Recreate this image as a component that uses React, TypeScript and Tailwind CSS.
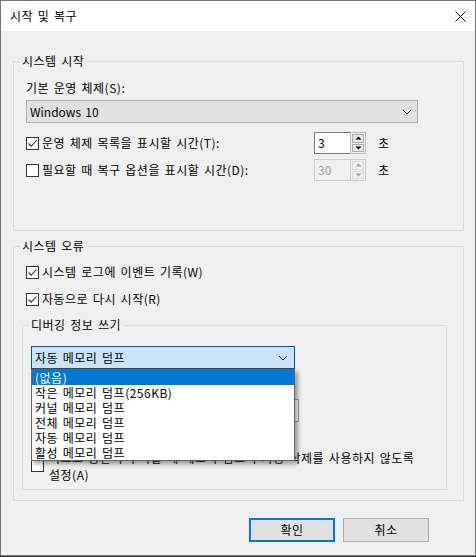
import type { ReactNode } from 'react';

const font = { fontFamily: '"Noto Sans CJK KR", "Noto Sans", sans-serif' };

function CheckBox({ checked }: { checked?: boolean }) {
  return (
    <span className="flex h-[13px] w-[13px] flex-shrink-0 items-center justify-center border border-[#333333] bg-white">
      {checked && (
        <svg width="11" height="11" viewBox="0 0 11 11">
          <path d="M1.5 5.5 L4.2 8.2 L9.5 2.5" fill="none" stroke="#333333" strokeWidth="1.1" />
        </svg>
      )}
    </span>
  );
}

function Chevron() {
  return (
    <svg width="10" height="6" viewBox="0 0 10 6">
      <path d="M1 1 L5 5 L9 1" fill="none" stroke="#333333" strokeWidth="1" />
    </svg>
  );
}

function Group({ title, className, children }: { title: string; className: string; children: ReactNode }) {
  return (
    <div className={`relative border border-[#dcdcdc] ${className}`}>
      <span className="absolute -top-[9px] left-[6px] bg-[#f0f0f0] px-[2px] text-[12px] leading-[16px] text-black">
        {title}
      </span>
      {children}
    </div>
  );
}

function Spinner({ value, disabled }: { value: string; disabled?: boolean }) {
  const arrow = disabled ? '#a0a0a0' : '#000000';
  return (
    <div className="flex h-[22px] w-[52px]">
      <div
        className={`w-[36px] border border-r-0 pl-[3px] text-[12px] leading-[20px] tracking-normal ${
          disabled ? 'border-[#cccccc] bg-[#f0f0f0] text-[#a0a0a0]' : 'border-[#7a7a7a] bg-white text-black'
        }`}
      >
        {value}
      </div>
      <div
        className={`flex w-[16px] flex-col gap-px border p-px ${
          disabled ? 'border-[#cccccc] bg-[#f0f0f0]' : 'border-[#bcbcbc] bg-[#f0f0f0]'
        }`}
      >
        <span
          className={`flex flex-1 items-center justify-center border ${
            disabled ? 'border-[#dcdcdc] bg-[#f0f0f0]' : 'border-[#adadad] bg-[#e5e5e5]'
          }`}
        >
          <svg width="7" height="4" viewBox="0 0 7 4">
            <path d="M0.5 3.5 L3.5 0.5 L6.5 3.5 Z" fill={arrow} />
          </svg>
        </span>
        <span
          className={`flex flex-1 items-center justify-center border ${
            disabled ? 'border-[#dcdcdc] bg-[#f0f0f0]' : 'border-[#adadad] bg-[#e5e5e5]'
          }`}
        >
          <svg width="7" height="4" viewBox="0 0 7 4">
            <path d="M0.5 0.5 L3.5 3.5 L6.5 0.5 Z" fill={arrow} />
          </svg>
        </span>
      </div>
    </div>
  );
}

const dumpOptions = ['(없음)', '작은 메모리 덤프(256KB)', '커널 메모리 덤프', '전체 메모리 덤프', '자동 메모리 덤프', '활성 메모리 덤프'];

export default function App() {
  return (
    <div className="min-h-[557px] w-[476px] bg-[#3c3c3c] tracking-[0.5px] text-black [word-spacing:1.5px]" style={font}>
      <div className="flex h-[556px] w-[476px] flex-col border border-[#767676] bg-[#f0f0f0]">
        {/* title bar */}
        <div className="flex h-[30px] items-center justify-between bg-white pl-[9px] pr-[9px]">
          <span className="text-[12px] leading-[16px]">시작 및 복구</span>
          <svg width="11" height="11" viewBox="0 0 11 11">
            <path d="M0.5 0.5 L10.5 10.5 M10.5 0.5 L0.5 10.5" stroke="#000000" strokeWidth="1" />
          </svg>
        </div>

        <div className="flex flex-col pl-[12px] pr-[11px] pt-[30px]">
          <Group title="시스템 시작" className="h-[170px] pl-[12px] pt-[18px]">
            <div className="text-[12px] leading-[16px]">기본 운영 체제(S):</div>
            <div className="mt-[4px] flex h-[23px] w-[392px] items-center justify-between border border-[#adadad] bg-[#e1e1e1] pl-[3px] pr-[5px]">
              <span className="text-[12px] leading-[16px] tracking-normal">Windows 10</span>
              <Chevron />
            </div>
            <div className="mt-[9px] flex h-[22px] items-center">
              <div className="flex w-[288px] items-center gap-[3px]">
                <CheckBox checked />
                <span className="text-[12px] leading-[16px]">운영 체제 목록을 표시할 시간(T):</span>
              </div>
              <Spinner value="3" />
              <span className="ml-[12px] text-[12px] leading-[16px]">초</span>
            </div>
            <div className="mt-[5px] flex h-[22px] items-center">
              <div className="flex w-[288px] items-center gap-[3px]">
                <CheckBox />
                <span className="text-[12px] leading-[16px]">필요할 때 복구 옵션을 표시할 시간(D):</span>
              </div>
              <Spinner value="30" disabled />
              <span className="ml-[12px] text-[12px] leading-[16px]">초</span>
            </div>
          </Group>

          <Group title="시스템 오류" className="mt-[15px] h-[255px] pl-[12px] pr-[16px] pt-[17px]">
            <div className="flex h-[16px] items-center gap-[3px]">
              <CheckBox checked />
              <span className="text-[12px] leading-[16px]">시스템 로그에 이벤트 기록(W)</span>
            </div>
            <div className="mt-[11px] flex h-[16px] items-center gap-[3px]">
              <CheckBox checked />
              <span className="text-[12px] leading-[16px]">자동으로 다시 시작(R)</span>
            </div>

            <Group title="디버깅 정보 쓰기" className="-ml-[4px] mt-[18px] h-[165px] pl-[8px] pt-[20px]">
              <div className="relative w-[264px]">
                <div className="flex h-[23px] items-center justify-between border border-[#005499] bg-[#cce4f7] pl-[3px] pr-[6px]">
                  <span className="text-[12px] leading-[16px]">자동 메모리 덤프</span>
                  <Chevron />
                </div>
                <ul className="absolute left-0 top-[23px] z-10 w-[264px] border border-[#646464] bg-white shadow-[3px_3px_4px_rgba(0,0,0,0.35)]">
                  {dumpOptions.map((option, i) => (
                    <li
                      key={option}
                      className={`h-[15px] pl-[3px] text-[12px] leading-[15px] ${
                        i === 0 ? 'bg-[#0078d7] text-white' : 'text-black'
                      }`}
                    >
                      {option}
                    </li>
                  ))}
                </ul>
              </div>
              <div className="mt-[8px] text-[12px] leading-[16px]">덤프 파일:</div>
              <div className="mt-[6px] h-[23px] w-[268px] border border-[#a0a0a0] bg-white pl-[3px] text-[12px] leading-[21px]">
                %SystemRoot%\MEMORY.DMP
              </div>
              <div className="mt-[6px] flex h-[16px] items-center gap-[3px]">
                <CheckBox checked />
                <span className="text-[12px] leading-[16px]">기존 파일 덮어쓰기(O)</span>
              </div>
              <div className="mt-[5px] flex items-start gap-[5px]">
                <span className="mt-[10px]">
                  <CheckBox />
                </span>
                <span className="whitespace-nowrap text-[12px] leading-[17px]">
                  디스크 공간이 부족할 때 메모리 덤프의 자동 삭제를 사용하지 않도록
                  <br />
                  설정(A)
                </span>
              </div>
            </Group>
          </Group>

          <div className="mr-[35px] mt-[17px] flex justify-end gap-[8px]">
            <button className="h-[24px] w-[86px] border-2 border-[#0078d7] bg-[#e1e1e1] text-[12px] leading-[16px]">
              확인
            </button>
            <button className="h-[24px] w-[86px] border border-[#adadad] bg-[#e1e1e1] text-[12px] leading-[16px]">
              취소
            </button>
          </div>
        </div>
      </div>
    </div>
  );
}
